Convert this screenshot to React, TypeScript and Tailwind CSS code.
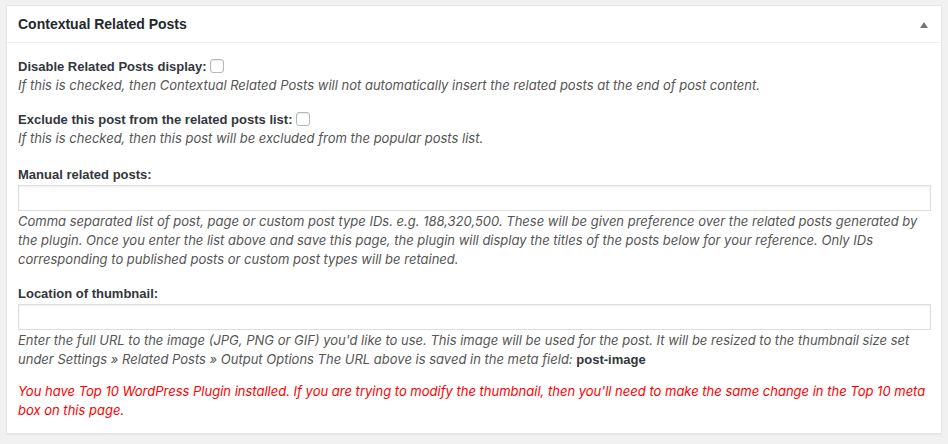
import React from 'react';

const Checkbox: React.FC = () => (
  <span className="ml-[3px] inline-block h-[14px] w-[14px] translate-y-[2px] rounded-[3px] border border-[#b4b9be] bg-white shadow-[inset_0_1px_2px_rgba(0,0,0,0.1)]" />
);

const desc = 'italic text-[#555] font-["Inter",sans-serif]';

const App: React.FC = () => {
  return (
    <div className='h-[444px] w-[948px] bg-[#f1f1f1] px-[6px] pt-[5px] font-["Liberation_Sans",Arial,sans-serif] text-[13px] text-[#32373c]'>
      <div className="border border-[#e5e5e5] bg-white shadow-[0_1px_1px_rgba(0,0,0,0.04)]">
        {/* Header */}
        <div className="flex h-[37px] items-center justify-between border-b border-[#eee] pl-[11px] pr-[13px]">
          <h2 className="text-[14px] font-bold text-[#23282d]">Contextual Related Posts</h2>
          <svg width="8" height="6" viewBox="0 0 8 6" className="mt-[1px]">
            <polygon points="4,0 8,6 0,6" fill="#72777c" />
          </svg>
        </div>

        {/* Body */}
        <div className="pl-[11px] pr-[10px] pt-[14px] pb-[13px] leading-[19px]">
          <div>
            <p className="font-bold">
              Disable Related Posts display:
              <Checkbox />
            </p>
            <p className={desc}>
              If this is checked, then Contextual Related Posts will not automatically insert the related posts at the end of post content.
            </p>
          </div>

          <div className="mt-[15px]">
            <p className="font-bold">
              Exclude this post from the related posts list:
              <Checkbox />
            </p>
            <p className={desc}>
              If this is checked, then this post will be excluded from the popular posts list.
            </p>
          </div>

          <div className="mt-[17px]">
            <p className="font-bold">Manual related posts:</p>
            <input
              type="text"
              className="mt-[1px] block h-[26px] w-full border border-[#ddd] bg-white shadow-[inset_0_1px_2px_rgba(0,0,0,0.07)] outline-none"
            />
            <p className={`mt-[1px] ${desc}`}>
              Comma separated list of post, page or custom post type IDs. e.g. 188,320,500. These will be given preference over the related posts generated by the plugin. Once you enter the list above and save this page, the plugin will display the titles of the posts below for your reference. Only IDs corresponding to published posts or custom post types will be retained.
            </p>
          </div>

          <div className="mt-[15px]">
            <p className="font-bold">Location of thumbnail:</p>
            <input
              type="text"
              className="mt-[1px] block h-[26px] w-full border border-[#ddd] bg-white shadow-[inset_0_1px_2px_rgba(0,0,0,0.07)] outline-none"
            />
            <p className={`mt-[1px] ${desc}`}>
              Enter the full URL to the image (JPG, PNG or GIF) you'd like to use. This image will be used for the post. It will be resized to the thumbnail size set under Settings » Related Posts » Output Options The URL above is saved in the meta field:{' '}
              <strong className='font-["Liberation_Sans",Arial,sans-serif] font-bold not-italic text-[#32373c]'>post-image</strong>
            </p>
          </div>

          <p className={`mt-[13px] ${desc} text-[#ff0000]`}>
            You have Top 10 WordPress Plugin installed. If you are trying to modify the thumbnail, then you'll need to make the same change in the Top 10 meta box on this page.
          </p>
        </div>
      </div>
    </div>
  );
};

export default App;
